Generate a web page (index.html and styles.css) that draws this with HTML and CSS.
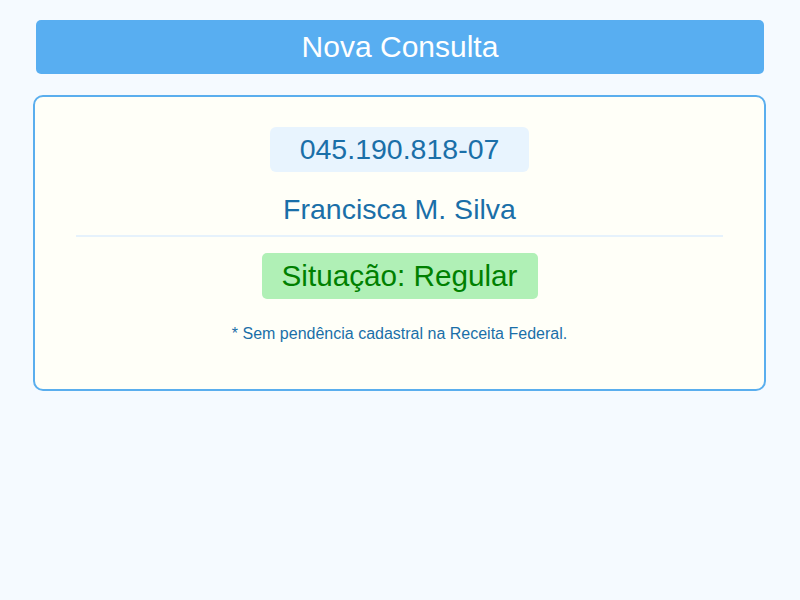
FILE: index.html
```html
<!DOCTYPE html>
<html lang="pt-BR">
<head>
<meta charset="utf-8">
<title>Nova Consulta</title>
<link rel="stylesheet" href="styles.css">
</head>
<body>
<div class="page">
  <header class="topbar">Nova Consulta</header>
  <section class="card">
    <div class="cpf">045.190.818-07</div>
    <div class="name">Francisca M. Silva</div>
    <hr class="divider">
    <div class="status">Situação: Regular</div>
    <p class="note">* Sem pendência cadastral na Receita Federal.</p>
  </section>
</div>
</body>
</html>
```
FILE: styles.css
```css
html, body {
  margin: 0;
  padding: 0;
}
body {
  background: #f5faff;
  font-family: "Liberation Sans", Arial, sans-serif;
  width: 800px;
  height: 600px;
}
.page {
  padding: 20px 34px 0 33px;
  display: flex;
  flex-direction: column;
}
.topbar {
  margin: 0 2px 0 3px;
  height: 54px;
  background: #58aef1;
  border-radius: 5px;
  color: #ffffff;
  font-size: 30px;
  line-height: 53px;
  text-align: center;
}
.card {
  margin-top: 21px;
  height: 296px;
  box-sizing: border-box;
  border: 2px solid #5aaeee;
  border-radius: 10px;
  background: #fffff8;
  display: flex;
  flex-direction: column;
  align-items: center;
  padding-top: 30px;
}
.cpf {
  background: #e8f4fe;
  border-radius: 6px;
  color: #1a6fa8;
  font-size: 28.5px;
  line-height: 45px;
  padding: 0 30px;
}
.name {
  margin-top: 18px;
  color: #1a6fa8;
  font-size: 28.5px;
  line-height: 38px;
}
.divider {
  align-self: stretch;
  margin: 7px 41px 0;
  border: 0;
  height: 2px;
  background: #e6f2fc;
}
.status {
  margin-top: 16px;
  background: #b0f0b6;
  border-radius: 5px;
  color: #008000;
  font-size: 29.7px;
  line-height: 46px;
  padding: 0 20px;
}
.note {
  margin: 24px 0 0;
  color: #1a6fa8;
  font-size: 16px;
  line-height: 22px;
}
```
